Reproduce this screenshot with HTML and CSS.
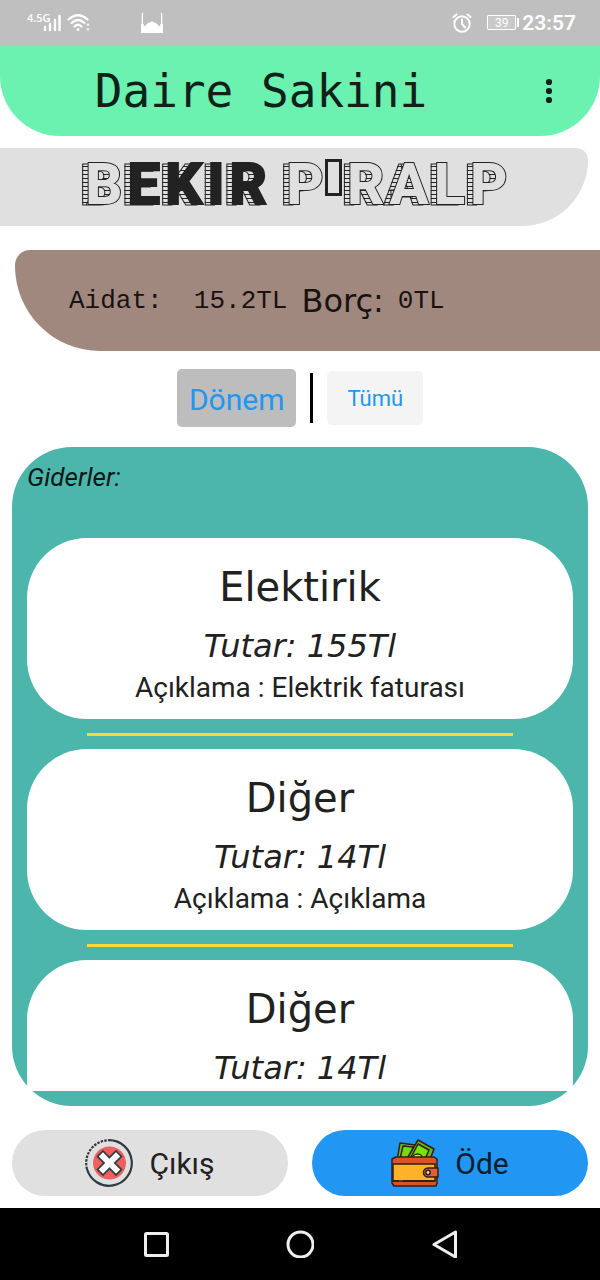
FILE: index.html
```html
<!DOCTYPE html>
<html lang="tr">
<head>
<meta charset="utf-8">
<meta name="viewport" content="width=device-width, initial-scale=1">
<title>Daire Sakini</title>
<link rel="stylesheet" href="styles.css">
</head>
<body>
<div class="app">
  <div class="status">
    <div class="status-left">
      <span class="network">4.5G</span>
      <svg class="signal" width="18" height="18" viewBox="0 0 18 18" stroke="#fff" stroke-width="2.4" stroke-linecap="round"><path d="M2 13v3M7 10v6M12 6v10M16.500 2v14"/></svg>
      <svg class="wifi" width="24" height="20" viewBox="0 0 24 20" fill="none" stroke="#fff" stroke-width="2.200" stroke-linecap="round"><path d="M1.500 6.500Q11 -2 20.500 6.500M4.500 10Q11 4 17.500 10M7.500 13.500Q11 10 14.500 13.500"/><circle cx="11" cy="16.500" r="1.500" fill="#fff" stroke="none"/><path d="M21 10l1.700 2.500h-3.400zM21 18l1.700-2.500h-3.400z" fill="#fff" stroke="none"/></svg>
      <svg class="mosque" width="22" height="22" viewBox="0 0 22 22" fill="#fff"><path d="M0 21V12h.7V2l.6-2 .7 2v10h.8v3l3.200-3c1.500-1.500 4-1.500 5-3 1 1.500 3.500 1.500 5 3l3.200 3v-3h.8V2l.7-2 .6 2v10h.7v9z"/></svg>
    </div>
    <div class="status-right">
      <svg width="20" height="20" viewBox="0 0 20 20" fill="none" stroke="#fff" stroke-width="2" stroke-linecap="round"><circle cx="10" cy="11" r="7.700"/><path d="M10 6.500V11l3 3.500M1.500 4l3-2.500M18.500 4l-3-2.500"/></svg>
      <span class="battery">39</span>
      <span class="clock">23:57</span>
    </div>
  </div>

  <header class="header">
    <h1>Daire Sakini</h1>
    <button class="more" type="button" aria-label="Menü"><svg width="8" height="26" viewBox="0 0 8 26" fill="#10211a"><circle cx="4" cy="4" r="3.100"/><circle cx="4" cy="13" r="3.100"/><circle cx="4" cy="22" r="3.100"/></svg></button>
  </header>

  <div class="resident"><h2><span class="block" data-c="B">B</span><span class="block solid" data-c="E">E</span><span class="block solid" data-c="K">K</span><span class="block solid" data-c="I">I</span><span class="block solid" data-c="R">R</span> <span class="block" data-c="P">P</span><span class="missing"></span><span class="block" data-c="R">R</span><span class="block" data-c="A">A</span><span class="block" data-c="L">L</span><span class="block" data-c="P">P</span></h2></div>

  <div class="dues"><span class="mono">Aidat:&nbsp; 15.2TL</span><span class="debt">Borç:</span><span class="mono">0TL</span></div>

  <div class="tabs">
    <button class="tab active" type="button">Dönem</button>
    <span class="rule"></span>
    <button class="tab" type="button">Tümü</button>
  </div>

  <main class="panel">
    <h2 class="caption">Giderler:</h2>
    <div class="list">
      <article class="card"><h3>Elektirik</h3><p class="amount">Tutar: 155Tl</p><p class="note">Açıklama : Elektrik faturası</p></article>
      <hr class="divider">
      <article class="card"><h3>Diğer</h3><p class="amount">Tutar: 14Tl</p><p class="note">Açıklama : Açıklama</p></article>
      <hr class="divider">
      <article class="card"><h3>Diğer</h3><p class="amount">Tutar: 14Tl</p></article>
    </div>
  </main>

  <div class="actions">
    <button class="action" type="button">
      <svg width="48" height="48" viewBox="0 0 48 48" fill="none"><path d="M24 1.200A22.800 22.800 0 1 1 2 30" stroke="#303840" stroke-width="2.200"/><path d="M2 30A22.800 22.800 0 0 1 24 1.200" stroke="#303840" stroke-width="2.200" stroke-dasharray="2.500 1.200"/><circle cx="24.500" cy="24" r="16.500" fill="#ec6060"/><path d="M18 17.500l13 13M31 17.500l-13 13" stroke="#343c42" stroke-width="9.500" stroke-linecap="square" stroke-linejoin="round"/><path d="M18 17.500l13 13M31 17.500l-13 13" stroke="#fff" stroke-width="6" stroke-linecap="square"/></svg>
      <span>Çıkış</span>
    </button>
    <button class="action pay" type="button">
      <svg width="48" height="48" viewBox="0 0 48 48" stroke="#302017" stroke-width="1.500" stroke-linejoin="round"><path d="M9 4l15 2-3 16H6z" fill="#70bd18"/><path d="M12 7l10 1-3 12H9z" fill="#77dc05"/><path d="M27 1l16 9-5 13H14z" fill="#62b719"/><path d="M27 5l11 6-5 11H18z" fill="#77e500"/><path d="M21 21c0-8 11-8 11 0" fill="#b5ef50"/><path d="M1 20l4-2h38l3 2v24l-1 3H3l-2-3z" fill="#db5128"/><path d="M2 25h42v17H2z" fill="#ffb127"/><path d="M2 42h6M12 42h32" stroke-width="1.800"/><path d="M37 29h10v9H37a4.500 4.500 0 0 1 0-9z" fill="#e95b32"/><circle cx="37" cy="33.500" r="2.200" fill="#ddd"/></svg>
      <span>Öde</span>
    </button>
  </div>

  <nav class="navbar">
    <button type="button" aria-label="Son uygulamalar"><svg width="28" height="28" viewBox="0 0 28 28"><rect x="3.500" y="3.500" width="22" height="22" rx="1"/></svg></button>
    <button type="button" aria-label="Ana ekran"><svg width="28" height="28" viewBox="0 0 28 28"><circle cx="14.500" cy="14.500" r="12.500"/></svg></button>
    <button type="button" aria-label="Geri"><svg width="28" height="28" viewBox="0 0 28 28"><path d="M25.500 2v25L4 14.500z"/></svg></button>
  </nav>
</div>
</body>
</html>
```
FILE: styles.css
```css
* { box-sizing: border-box; }
body { margin: 0; background: #fff; color: #212121; font-family: Roboto, sans-serif; }
h1, h2, h3, p { margin: 0; font-weight: 400; }
button { border: 0; margin: 0; padding: 0; background: none; font: inherit; color: inherit; }
svg { display: block; flex: none; }
.app { display: flex; flex-direction: column; height: 100vh; }

.status { display: flex; justify-content: space-between; align-items: center; flex: none; height: 45px; padding: 0 24px 0 27px; background: #bfbfbf; color: #fff; }
.status-left, .status-right { display: flex; align-items: center; }
.network { font: 600 11px/12px "Open Sans", sans-serif; align-self: flex-start; }
.signal { margin-left: -8px; }
.wifi { margin-left: 6px; }
.mosque { margin-left: 50px; }
.battery { position: relative; margin: 0 6px 0 15px; width: 29px; height: 15px; border: 1px solid #fff; border-radius: 1px; background: #c9c9c9; font-size: 12px; line-height: 14px; text-align: center; }
.battery::after { content: ""; position: absolute; right: -4px; top: 2px; width: 2px; height: 9px; background: #fff; }
.clock { font-size: 21px; font-weight: 600; line-height: 24px; }

.header { display: flex; align-items: center; flex: none; height: 91px; padding: 0 44px 0 72px; background: #6bf2b0; border-radius: 0 0 60px 60px; color: #10211a; }
.header h1 { flex: 1; font: 46px/52px "DejaVu Sans Mono", monospace; text-align: center; }
.more { display: flex; justify-content: center; width: 14px; margin-left: 92px; }
.header h1 { white-space: nowrap; }

.resident { flex: none; margin: 12px 12px 0 0; height: 78px; padding: 1px 0 0; background: #e0e0e0; border-radius: 0 12px 66px 0; text-align: center; }
.resident h2 { position: relative; z-index: 0; font-size: 58px; line-height: 70px; font-weight: 800; white-space: nowrap; }
.block { position: relative; margin-left: 5px; color: #e0e0e0; -webkit-text-stroke: 2px #222; paint-order: stroke fill; }
.block.solid { color: #222; }
.block::before { content: attr(data-c); position: absolute; z-index: -1; left: -6px; top: 0; line-height: 70px; color: transparent; background: repeating-linear-gradient(#222 0 1px, #e0e0e0 1px 4px); -webkit-background-clip: text; background-clip: text; -webkit-text-stroke: 1px #222; }
.missing { display: inline-block; width: 17px; height: 37px; margin: 0 0 8px 1px; border: 3px solid #222; vertical-align: baseline; }

.dues { display: flex; align-items: center; flex: none; height: 101px; margin: 24px 0 0 15px; padding-left: 54px; background: #a1887f; border-radius: 15px 0 0 85px; color: #171311; white-space: nowrap; }
.mono { font: 26px/36px "Liberation Mono", monospace; }
.debt { margin: 0 14px; font: 32px/36px "DejaVu Sans", sans-serif; }

.tabs { display: flex; justify-content: center; align-items: center; flex: none; height: 58px; margin-top: 18px; color: #2196f3; }
.tab { height: 54px; padding: 0 20px; border-radius: 5px; background: #f4f4f4; font-size: 22px; }
.tab.active { height: 58px; padding: 2px 12px 0; background: #bdbdbd; font-size: 30px; }
.rule { width: 3px; height: 50px; margin: 0 14px; background: #000; }

.panel { display: flex; flex-direction: column; flex: 1; min-height: 0; margin: 20px 12px 0; padding: 15px; background: #4db6ac; border-radius: 60px; }
.caption { flex: none; margin-bottom: 46px; color: #0a1918; font-size: 26px; line-height: 30px; font-style: italic; }
.list { flex: 1; min-height: 0; overflow: hidden; text-align: center; }
.card { height: 181px; padding: 24px 0 0; border-radius: 60px; background: #fff; }
.card h3 { font: 40px/50px "DejaVu Sans", sans-serif; }
.amount { margin-top: 14px; font: italic 32px/40px "DejaVu Sans", sans-serif; }
.note { font-size: 28px; line-height: 44px; }
.divider { height: 3px; margin: 14px 60px 13px; border: 0; background: #fdd835; }

.actions { display: grid; grid-template-columns: 1fr 1fr; flex: none; gap: 24px; padding: 24px 12px 12px; }
.action { display: flex; justify-content: center; align-items: center; gap: 16px; height: 66px; border-radius: 33px; background: #e0e0e0; font-size: 30px; }
.pay { background: #2196f3; color: #071c2d; }

.navbar { display: flex; justify-content: center; align-items: center; flex: none; gap: 116px; height: 72px; background: #000; }
.navbar svg { fill: none; stroke: #eee; stroke-width: 3; stroke-linejoin: round; }
```
